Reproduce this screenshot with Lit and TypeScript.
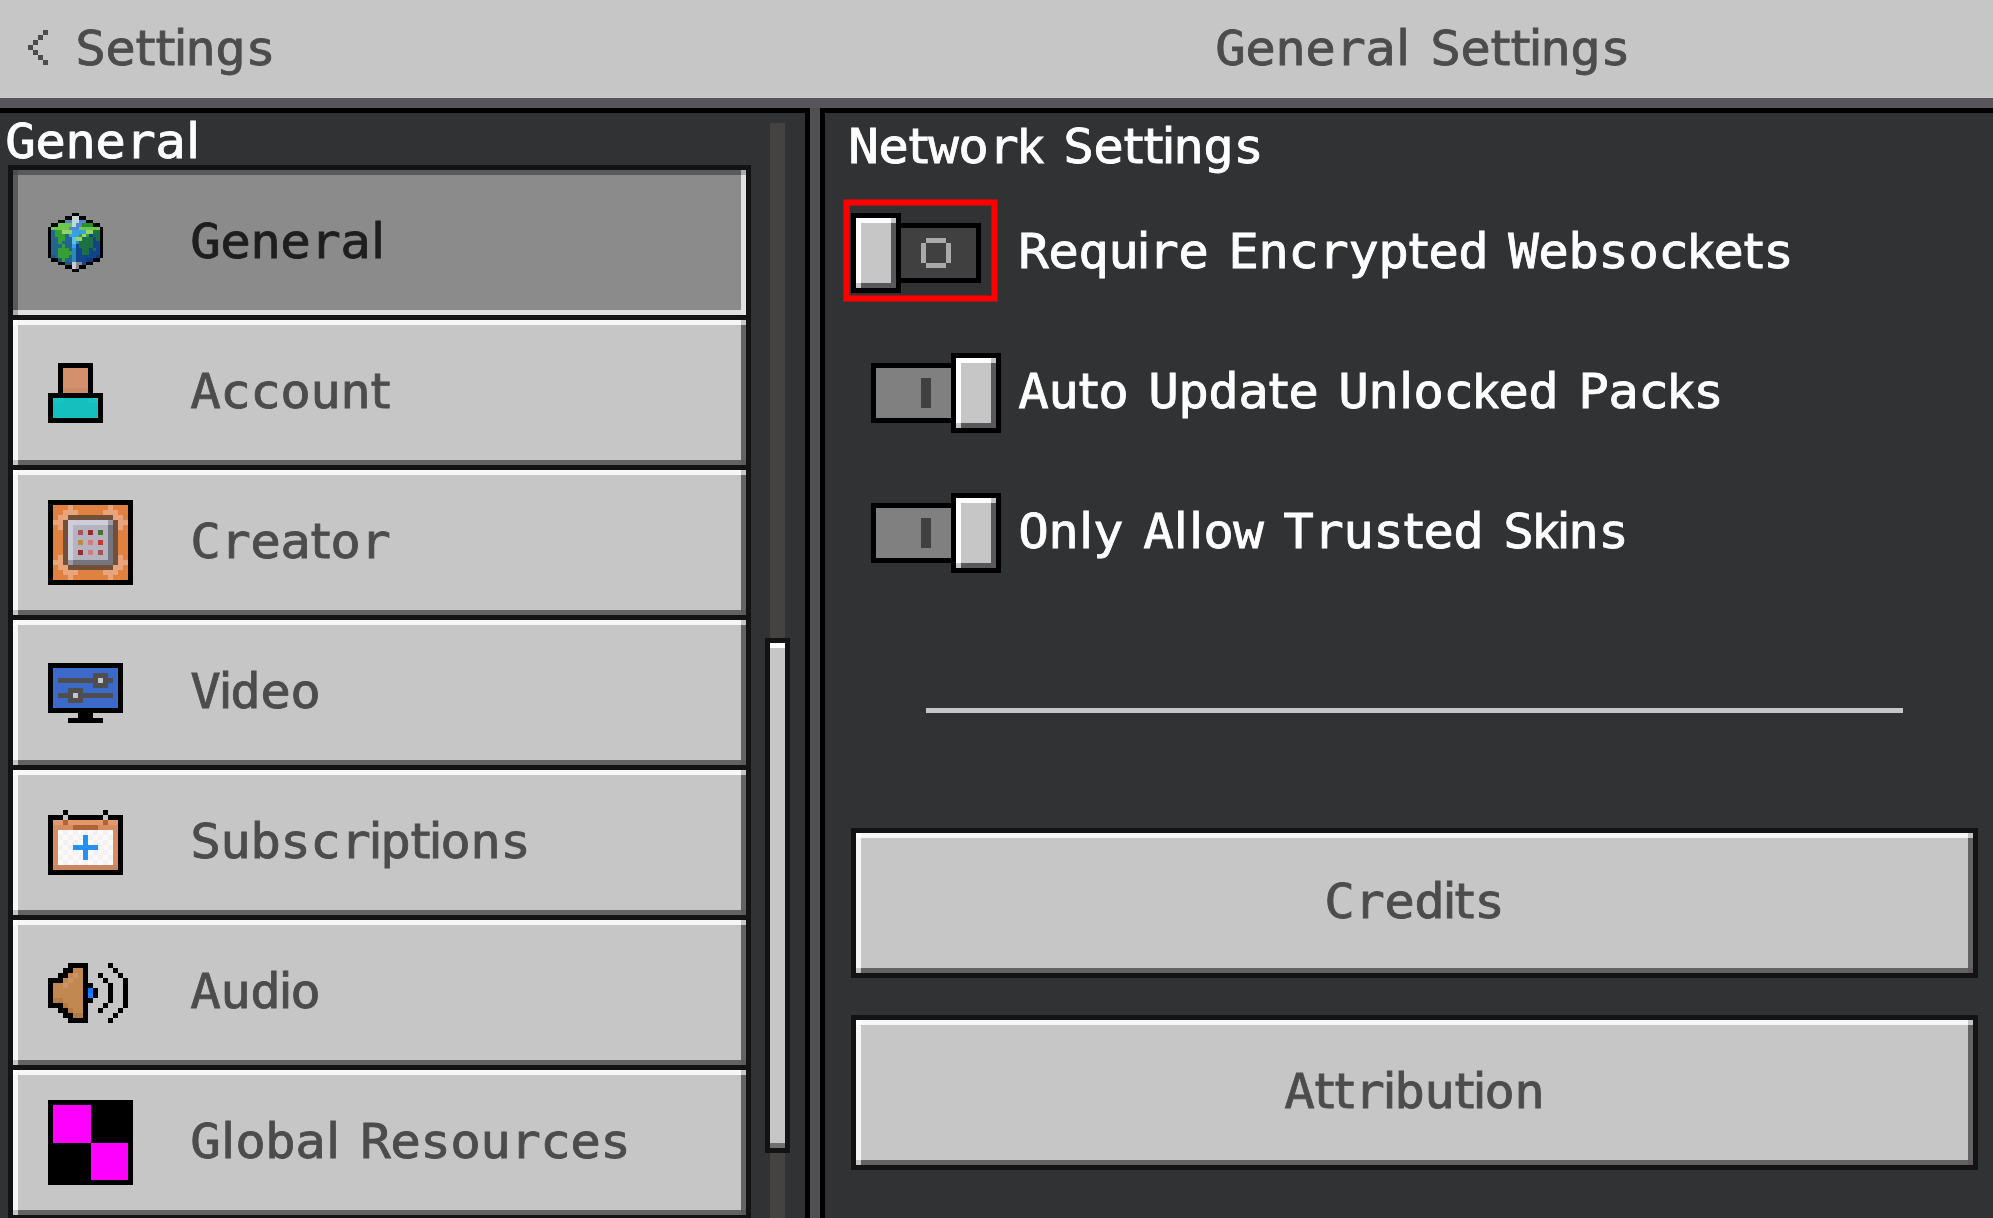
import { LitElement, html, svg, css } from "lit";
import { customElement, property } from "lit/decorators.js";

/* ---------- text on the 5px grid ---------- */

const UNIT = 5;
const STRETCH = 1.06;
const ADVANCE: Record<string, number> = { i: 2, l: 3, t: 4, k: 5, " ": 4 };
const FACE: Record<string, string> = { i: "narrow", l: "narrow", t: "narrow", " ": "narrow", k: "medium" };

interface Run { face: string; chars: string; xs: string[]; }

@customElement("grid-text")
class GridText extends LitElement {
  static styles = css`
    :host { display: block; flex: none; }
    svg { display: block; overflow: visible; }
    text {
      font-family: "DejaVu Sans Mono", "Liberation Mono", monospace;
      font-size: 48px;
      text-anchor: middle;
      fill: currentColor;
      stroke: currentColor;
      stroke-width: 0.8px;
      white-space: pre;
    }
    .narrow { font-family: "DejaVu Sans", "Liberation Sans", sans-serif; }
    .medium { font-family: "Liberation Sans", "DejaVu Sans", sans-serif; }
  `;
  @property() text = "";
  render() {
    let pen = 0;
    const runs: Run[] = [];
    for (const ch of this.text) {
      const adv = (ADVANCE[ch] ?? 6) * UNIT;
      const face = FACE[ch] ?? "wide";
      let run = runs[runs.length - 1];
      if (!run || run.face !== face) {
        run = { face, chars: "", xs: [] };
        runs.push(run);
      }
      run.chars += ch;
      run.xs.push(((pen + (adv - UNIT) / 2) / STRETCH).toFixed(1));
      pen += adv;
    }
    return html`<svg width=${pen - UNIT} height="35">
      <text transform="scale(${STRETCH} 1)" y="35">${runs.map((r) =>
        svg`<tspan class=${r.face} x=${r.xs.join(" ")}>${r.chars}</tspan>`)}</text>
    </svg>`;
  }
}

/* ---------- pixel icons ---------- */

interface Sprite { w: number; h: number; rows: string[]; colors: Record<string, string>; }

const SPRITES: Record<string, Sprite> = {
  globe: {
    w: 55, h: 59,
    rows: [
      ".......kk.......",
      ".....kkwwkk.....",
      "...kkbbwwbbkk...",
      ".kkggggwbbdddkk.",
      "kgggggbbbggggggk",
      "ksGGyyyccccyyDDk",
      "ksGGGscccGyGNDDk",
      "kssGGsspyyDDDNDk",
      "kssGsssptDDDDNNk",
      "ksssGsscNDDDDNNk",
      "kssGGGstNNDDNDNk",
      "kssGGGGtNNDDNNNk",
      "kSsGGGstNNNNNNMk",
      ".kkSGsstNNNMMkk.",
      "...kkSSezzNkk...",
      ".....kkezkk.....",
      ".......kk.......",
    ],
    colors: {
      k: "#000", w: "#c1d8d9", b: "#4f86d6", g: "#6bc84f", d: "#278f2c", s: "#24658f", S: "#1d5780",
      G: "#34a035", y: "#96d369", c: "#38a2e0", p: "#5bc3f2", t: "#2c89bd", D: "#1c7044", N: "#11458b",
      M: "#0d3a78", e: "#cccccc", z: "#878787",
    },
  },
  account: {
    w: 55, h: 60,
    rows: [
      "..kkkkkkk..", "..kaaaaak..", "..kaaaaak..", "..kaaaaak..", "..kaaaaak..", "..kbbbbbk..",
      "kkkkkkkkkkk", "kcctttttcck", "ktttttttttk", "ktttttttttk", "ktttttttttk", "kkkkkkkkkkk",
    ],
    colors: { k: "#000", a: "#d3906d", b: "#cc8b68", c: "#17c6c4", t: "#15bfbd" },
  },
  creator: {
    w: 85, h: 85,
    rows: [
      "kkkkkkkkkkkkkkkkk",
      "koooloooooooloook",
      "koolllooooolllook",
      "kollnnnnnnnnnllok",
      "kllnwwwwwwwwmnllk",
      "kolnwgggggggdnlok",
      "koonwg1g2g3gdnook",
      "koonwgggggggdnook",
      "koonwg4g5g6gdnook",
      "koonwgggggggdnook",
      "koonwg2g5g1gdnook",
      "kolnwgggggggdnlok",
      "kllnmddddddddnllk",
      "kollnnnnnnnnnllok",
      "koolllooooolllook",
      "koooloooooooloook",
      "kkkkkkkkkkkkkkkkk",
    ],
    colors: {
      k: "#000300", o: "#e08142", l: "#e9a47c", n: "#71503a", w: "#cdccd8", g: "#b5b3bf", d: "#76747f",
      m: "#9d9ba8", "1": "#a95454", "2": "#9f2a2a", "3": "#4c7030", "4": "#c18a3d", "5": "#d17b7b", "6": "#cc3535",
    },
  },
  video: {
    w: 75, h: 60,
    rows: [
      "kkkkkkkkkkkkkkk",
      "kbbbbbbbbbbbbbk",
      "kbbbbbbbbgggbbk",
      "kbggggggggwggbk",
      "kbbbbbbbbgggbbk",
      "kbbbgggbbbbbbbk",
      "kbgggwgggggggbk",
      "kbbbgggbbbbbbbk",
      "kbbbbbbbbbbbbbk",
      "kkkkkkkkkkkkkkk",
      "......kkk......",
      "....kkkkkkk....",
    ],
    colors: { k: "#000", b: "#3b6acb", g: "#4e4e50", w: "#c6c6c6" },
  },
  subscriptions: {
    w: 75, h: 65,
    rows: [
      "...k.......k...",
      "kkk.kkkkkkk.kkk",
      "kaanaaaaaaanaak",
      "koooonnnnnooook",
      "kowvwvwvwvwvwok",
      "kovwvwvbvwvwvok",
      "kowvwvwbwvwvwok",
      "kovwvbbbbbvwvok",
      "kowvwvwbwvwvwok",
      "kovwvwvbvwvwvok",
      "kowvwvwvwvwvwok",
      "kccccccccccccck",
      "kkkkkkkkkkkkkkk",
    ],
    colors: { k: "#000", a: "#e4986a", o: "#d78d62", n: "#ad6538", c: "#c98761", w: "#fbfafa", v: "#f3f1f1", b: "#2691f5" },
  },
  audio: {
    w: 80, h: 60,
    rows: [
      "....kkkk....k...",
      "...kkttk.....k..",
      "..kktltk..k...k.",
      "kkktlttk...k...k",
      "kttltttkk...k..k",
      "kttttttkbk..k..k",
      "kttttttkpk..k..k",
      "kddttttkk...k..k",
      "kkkdtttk...k...k",
      "..kkdttk..k...k.",
      "...kkddk.....k..",
      "....kkkk....k...",
    ],
    colors: { k: "#000", t: "#c18851", l: "#c99468", d: "#b37a43", b: "#0f76ff", p: "#1f80ff" },
  },
  resources: {
    w: 85, h: 85,
    rows: [
      "k".repeat(34), "k".repeat(34),
      ...Array(15).fill("kk" + "m".repeat(15) + "k".repeat(17)),
      ...Array(15).fill("k".repeat(17) + "m".repeat(15) + "kk"),
      "k".repeat(34), "k".repeat(34),
    ],
    colors: { k: "#000", m: "#ff00ff" },
  },
  ring: {
    w: 30, h: 30,
    rows: [".xxxx.", "x....x", "x....x", "x....x", "x....x", ".xxxx."],
    colors: { x: "#a9a9a9" },
  },
  bar: { w: 10, h: 30, rows: ["x"], colors: { x: "#404040" } },
  back: {
    w: 20, h: 35,
    rows: ["...x", "..x.", ".x..", "x...", ".x..", "..x.", "...x"],
    colors: { x: "#4c4c4c" },
  },
};

@customElement("pixel-icon")
class PixelIcon extends LitElement {
  static styles = css`
    :host { display: block; flex: none; }
    svg { display: block; }
  `;
  @property() name = "";
  render() {
    const s = SPRITES[this.name];
    const runs: unknown[] = [];
    s.rows.forEach((row, y) => {
      let x = 0;
      while (x < row.length) {
        let end = x + 1;
        while (end < row.length && row[end] === row[x]) end++;
        if (row[x] !== ".") {
          runs.push(svg`<rect x=${x} y=${y} width=${end - x} height="1" fill=${s.colors[row[x]]} />`);
        }
        x = end;
      }
    });
    return html`<svg width=${s.w} height=${s.h} viewBox="0 0 ${s.rows[0].length} ${s.rows.length}"
      preserveAspectRatio="none" shape-rendering="crispEdges" aria-hidden="true">${runs}</svg>`;
  }
}

/* ---------- shared bevel ---------- */

const bevel = css`
  .bevel {
    --hi: #f7f7f7;
    --lo: #636363;
    --tl: #ffffff;
    --tr: #c6c6c6;
    --bl: #c6c6c6;
    --br: #5b595c;
    --face: #c6c6c6;
    background:
      linear-gradient(var(--tl), var(--tl)) left top / 5px 5px no-repeat,
      linear-gradient(var(--tr), var(--tr)) right top / 5px 5px no-repeat,
      linear-gradient(var(--bl), var(--bl)) left bottom / 5px 5px no-repeat,
      linear-gradient(var(--br), var(--br)) right bottom / 5px 5px no-repeat,
      linear-gradient(var(--hi), var(--hi)) left top / 100% 5px no-repeat,
      linear-gradient(var(--lo), var(--lo)) left bottom / 100% 5px no-repeat,
      linear-gradient(var(--hi), var(--hi)) left top / 5px 100% no-repeat,
      linear-gradient(var(--lo), var(--lo)) right top / 5px 100% no-repeat,
      var(--face);
  }
`;

/* ---------- toggle ---------- */

@customElement("pixel-toggle")
class PixelToggle extends LitElement {
  static styles = [bevel, css`
    :host { display: block; flex: none; width: 150px; }
    .toggle { display: flex; align-items: center; height: 80px; }
    .toggle.on { flex-direction: row-reverse; }
    .knob { box-sizing: border-box; width: 50px; height: 80px; border: 5px solid #000; }
    .knob.bevel { --hi: #fff; --lo: #585759; background-origin: padding-box; background-clip: padding-box; }
    .track {
      box-sizing: border-box; display: flex; width: 80px; height: 60px;
      padding: 10px 0 0 20px; border: 5px solid #000; border-left: 0; background: #404040;
    }
    .on .track { padding-left: 45px; border-left: 5px solid #000; border-right: 0; background: #808080; }
  `];
  @property({ type: Boolean }) on = false;
  render() {
    return html`<div class="toggle ${this.on ? "on" : ""}" role="switch" aria-checked=${this.on}>
      <div class="knob bevel"></div>
      <div class="track"><pixel-icon name=${this.on ? "bar" : "ring"}></pixel-icon></div>
    </div>`;
  }
}

/* ---------- page ---------- */

const SECTIONS = [
  { icon: "globe", label: "General", selected: true },
  { icon: "account", label: "Account" },
  { icon: "creator", label: "Creator" },
  { icon: "video", label: "Video" },
  { icon: "subscriptions", label: "Subscriptions" },
  { icon: "audio", label: "Audio" },
  { icon: "resources", label: "Global Resources" },
];

const OPTIONS = [
  { label: "Require Encrypted Websockets", on: false, marked: true },
  { label: "Auto Update Unlocked Packs", on: true },
  { label: "Only Allow Trusted Skins", on: true },
];

@customElement("app-root")
class AppRoot extends LitElement {
  static styles = [bevel, css`
    :host {
      display: flex; flex-direction: column; width: 100%; height: 100vh;
      overflow: hidden; background: #313234; color: #fff;
    }
    .header {
      box-sizing: border-box; flex: none; display: grid; grid-template-columns: 851px 1fr;
      height: 108px; padding-top: 30px; color: #4c4c4c;
      background: #c6c6c6; border-bottom: 10px solid #58565a;
      box-shadow: inset 0 -5px #c8c8c8;
    }
    .back { display: flex; gap: 30px; padding-left: 28px; }
    .title { display: flex; justify-content: center; padding-left: 2px; }
    .main { flex: 1; min-height: 0; display: grid; grid-template-columns: 810px 10px 1fr; background: #505052; }
    .side {
      box-sizing: border-box; min-height: 0; overflow: hidden;
      display: grid; grid-template-columns: 743px 25px; column-gap: 14px;
      padding: 10px 0 0 8px; background: #313234;
      border-top: 5px solid #000; border-right: 5px solid #000;
    }
    .list { margin-top: 7px; border: 5px solid #131313; border-bottom: 0; }
    .item {
      box-sizing: border-box; display: grid; grid-template-columns: 145px 1fr;
      height: 145px; margin-bottom: 5px; padding-left: 35px; align-items: start;
      color: #4c4c4c; outline: 5px solid #131313;
    }
    .item grid-text { margin-top: 53px; }
    .item.selected {
      --face: #8b8b8b; --hi: #5a5a5a; --lo: #e0e0e0;
      --tl: #4d4d4d; --tr: #acacac; --bl: #acacac; --br: #e4e4e4;
      color: #1e1e1e;
    }
    .scroll { display: flex; flex-direction: column; align-items: center;
      background: linear-gradient(#444342, #444342) center top / 15px 100% no-repeat; }
    .thumb {
      box-sizing: border-box; width: 25px; height: 515px; margin-top: 515px;
      border: 5px solid #131313; background: #c6c6c6;
      box-shadow: inset 0 5px #fff, inset 0 -5px #707070;
    }
    .content {
      box-sizing: border-box; min-width: 0; overflow: hidden;
      display: flex; flex-direction: column; padding: 15px 15px 0 26px;
      background: #313234; border-top: 5px solid #000; border-left: 5px solid #000;
    }
    .options { display: flex; flex-direction: column; gap: 60px; margin-top: 50px; }
    .option { display: flex; align-items: center; gap: 20px; height: 80px; position: relative; }
    .option grid-text { margin-top: -5px; }
    .mark {
      position: absolute; left: -7px; top: -13px; box-sizing: border-box;
      width: 153px; height: 101px; border: 5px solid #fe0000;
      box-shadow: 0 0 0 1px rgba(254, 0, 0, 0.55), inset 0 0 0 1px rgba(254, 0, 0, 0.55);
    }
    .rule { flex: none; height: 5px; margin: 135px 75px 115px; background: #c6c6c6; }
    .button {
      box-sizing: border-box; flex: none; display: flex; justify-content: center;
      height: 150px; padding-top: 50px; border: 5px solid #131313; color: #4c4c4c;
    }
    .button.bevel { background-origin: padding-box; background-clip: padding-box; }
    .button.tall { height: 155px; margin-top: 37px; padding-top: 53px; }
  `];

  render() {
    return html`
      <div class="header">
        <div class="back"><pixel-icon name="back"></pixel-icon><grid-text text="Settings"></grid-text></div>
        <div class="title"><grid-text text="General Settings"></grid-text></div>
      </div>
      <div class="main">
        <div class="side">
          <div>
            <grid-text text="General"></grid-text>
            <div class="list">
              ${SECTIONS.map((s) => html`
                <div class="item bevel ${s.selected ? "selected" : ""}">
                  <pixel-icon name=${s.icon}
                    style="margin-top:${Math.ceil((145 - SPRITES[s.icon].h) / 2)}px"></pixel-icon>
                  <grid-text text=${s.label}></grid-text>
                </div>`)}
            </div>
          </div>
          <div class="scroll"><div class="thumb"></div></div>
        </div>
        <div></div>
        <div class="content">
          <grid-text text="Network Settings"></grid-text>
          <div class="options">
            ${OPTIONS.map((o) => html`
              <div class="option">
                <pixel-toggle ?on=${o.on}></pixel-toggle>
                <grid-text text=${o.label}></grid-text>
                ${o.marked ? html`<div class="mark"></div>` : ""}
              </div>`)}
          </div>
          <div class="rule"></div>
          <div class="button bevel"><grid-text text="Credits"></grid-text></div>
          <div class="button bevel tall"><grid-text text="Attribution"></grid-text></div>
        </div>
      </div>
    `;
  }
}
